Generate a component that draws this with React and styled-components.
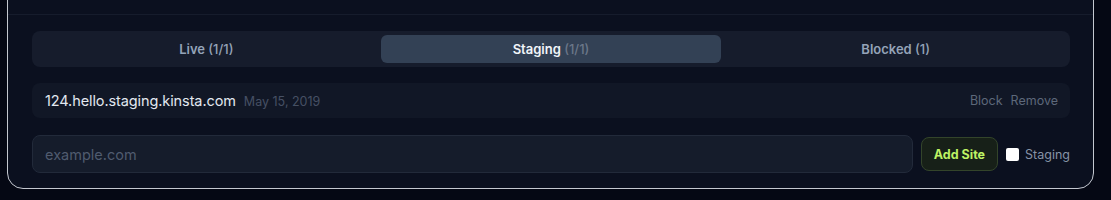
import styled, { createGlobalStyle } from "styled-components";

const GlobalStyle = createGlobalStyle`
  body {
    margin: 0;
    background: #050814;
    font-family: "Inter", "Noto Sans", sans-serif;
  }
`;

const tabs = [
  { label: "Live", count: "(1/1)" },
  { label: "Staging", count: "(1/1)", active: true },
  { label: "Blocked", count: "(1)" },
];

export default function App() {
  return (
    <>
      <GlobalStyle />
      <Card>
        <CardHeader />
        <CardBody>
          <TabList>
            {tabs.map((t) => (
              <Tab key={t.label} $active={t.active}>
                {t.label} <Count $active={t.active}>{t.count}</Count>
              </Tab>
            ))}
          </TabList>

          <SiteRow>
            <SiteInfo>
              <Domain>124.hello.staging.kinsta.com</Domain>
              <DateText>May 15, 2019</DateText>
            </SiteInfo>
            <Actions>
              <ActionLink>Block</ActionLink>
              <ActionLink>Remove</ActionLink>
            </Actions>
          </SiteRow>

          <AddRow>
            <SiteInput placeholder="example.com" />
            <AddButton>Add Site</AddButton>
            <CheckLabel>
              <Box type="checkbox" />
              Staging
            </CheckLabel>
          </AddRow>
        </CardBody>
      </Card>
    </>
  );
}

const Card = styled.div`
  width: 1087px;
  margin: -39px 0 0 7px;
  box-sizing: border-box;
  background: #0b101f;
  border: 1px solid #c4c8d0;
  border-radius: 0 0 16px 16px;
  overflow: hidden;
`;

const CardHeader = styled.div`
  height: 52px;
  border-bottom: 1px solid #161c2c;
`;

const CardBody = styled.div`
  padding: 16px 23px 15px 24px;
  display: flex;
  flex-direction: column;
  gap: 16px;
`;

const TabList = styled.div`
  display: grid;
  grid-template-columns: repeat(3, 1fr);
  gap: 4px;
  padding: 4px;
  height: 36px;
  box-sizing: border-box;
  background: #161c2c;
  border-radius: 8px;
`;

const Tab = styled.button`
  border: none;
  border-radius: 6px;
  background: ${(p) => (p.$active ? "#334155" : "transparent")};
  color: ${(p) => (p.$active ? "#f1f5f9" : "#94a3b8")};
  font-family: inherit;
  font-size: 13px;
  font-weight: 600;
  cursor: pointer;
`;

const Count = styled.span`
  font-weight: 500;
  color: ${(p) => (p.$active ? "#6b7789" : "#94a3b8")};
`;

const SiteRow = styled.div`
  display: flex;
  align-items: center;
  justify-content: space-between;
  height: 35px;
  padding: 0 12px 0 13px;
  background: #111726;
  border-radius: 8px;
`;

const SiteInfo = styled.div`
  display: flex;
  align-items: baseline;
  gap: 8px;
`;

const Domain = styled.span`
  color: #e2e8f0;
  font-size: 14.5px;
  letter-spacing: -0.1px;
`;

const DateText = styled.span`
  color: #465064;
  font-size: 12.5px;
`;

const Actions = styled.div`
  display: flex;
  gap: 8px;
`;

const ActionLink = styled.span`
  color: #5d687a;
  font-size: 12.5px;
  cursor: pointer;
`;

const AddRow = styled.div`
  display: flex;
  align-items: center;
  gap: 8px;
  margin-top: 1px;
`;

const SiteInput = styled.input`
  flex: 1;
  height: 38px;
  box-sizing: border-box;
  padding: 0 12px;
  background: #151c2b;
  border: 1px solid #222a3a;
  border-radius: 8px;
  color: #e2e8f0;
  font-family: inherit;
  font-size: 14.5px;
  outline: none;

  &::placeholder {
    color: #505b6f;
  }
`;

const AddButton = styled.button`
  height: 34px;
  padding: 0 12px;
  background: #172018;
  border: 1px solid #33442a;
  border-radius: 8px;
  color: #bef264;
  font-family: inherit;
  font-size: 12.5px;
  font-weight: 700;
  cursor: pointer;
`;

const CheckLabel = styled.label`
  display: flex;
  align-items: center;
  gap: 6px;
  color: #8793a6;
  font-size: 12.5px;
`;

const Box = styled.input`
  width: 13px;
  height: 13px;
  margin: 0;
  appearance: none;
  background: #fff;
  border-radius: 2px;
`;
